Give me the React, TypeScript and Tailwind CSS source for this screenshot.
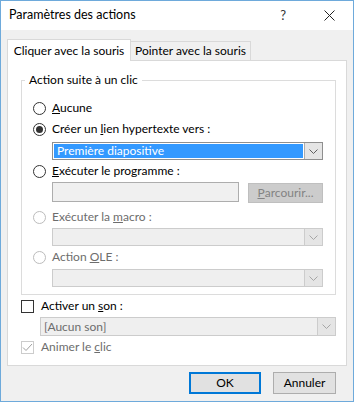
import React from "react";

const font = { fontFamily: 'Lato, "Noto Sans", "Segoe UI", sans-serif' };

function Radio({ checked, disabled }: { checked?: boolean; disabled?: boolean }) {
  return (
    <span
      className={`flex h-[13px] w-[13px] shrink-0 items-center justify-center rounded-full border bg-white ${
        disabled ? "border-[#bcbcbc]" : "border-[#333333]"
      }`}
    >
      {checked && <span className="h-[7px] w-[7px] rounded-full bg-[#333333]" />}
    </span>
  );
}

function Chevron({ color = "#606060" }: { color?: string }) {
  return (
    <svg width="9" height="5" viewBox="0 0 9 5">
      <path d="M0.5 0.5 L4.5 4.5 L8.5 0.5" fill="none" stroke={color} strokeWidth="1" />
    </svg>
  );
}

function Combo({
  value,
  selected,
  disabled,
  className,
}: {
  value?: string;
  selected?: boolean;
  disabled?: boolean;
  className?: string;
}) {
  return (
    <div
      className={`flex h-[18px] border ${
        disabled ? "border-[#cccccc] bg-[#efefef]" : "border-[#8f8f8f] bg-white"
      } ${className ?? ""}`}
    >
      <div
        className={`flex flex-1 items-center pl-[3px] text-[12px] leading-none ${
          selected ? "m-px bg-[#3399ff] text-white" : disabled ? "text-[#6d6d6d]" : "text-black"
        }`}
      >
        {value}
      </div>
      <div
        className={`flex w-[18px] items-center justify-center border-l ${
          disabled ? "border-[#cccccc] bg-[#e5e5e5]" : "border-[#adadad] bg-[#e5e5e5]"
        }`}
      >
        <Chevron color={disabled ? "#a6a6a6" : "#606060"} />
      </div>
    </div>
  );
}

export default function App() {
  return (
    <div
      className="flex h-[402px] w-[354px] flex-col border border-[#6eaadb] bg-[#f0f0f0] text-[12px] text-black"
      style={font}
    >
      {/* Title bar */}
      <div className="flex h-[29px] shrink-0 items-center bg-white pl-[8px]">
        <span className="text-[12.5px]">Paramètres des actions</span>
        <span className="ml-auto mr-[38px] text-[13px] text-[#333]">?</span>
        <svg width="11" height="11" viewBox="0 0 11 11" className="mr-[18px]">
          <path d="M0.5 0.5 L10.5 10.5 M10.5 0.5 L0.5 10.5" stroke="#222" strokeWidth="1" />
        </svg>
      </div>

      {/* Tabs */}
      <div className="flex h-[30px] shrink-0 items-end px-[6px]">
        <div className="relative z-10 -mb-px flex h-[22px] w-[124px] items-center justify-center border border-b-0 border-[#d9d9d9] bg-white">
          Cliquer avec la souris
        </div>
        <div className="flex h-[19px] w-[120px] items-center justify-center border border-b-0 border-l-0 border-[#d9d9d9] bg-[#f0f0f0]">
          Pointer avec la souris
        </div>
      </div>

      {/* Panel */}
      <div className="mx-[6px] flex h-[306px] shrink-0 flex-col border border-[#d9d9d9] bg-white pl-[13px] pr-[10px] pt-[11px]">
        <fieldset className="h-[223px] border border-[#dcdcdc] pl-[11px] pr-[12px]">
          <legend className="-ml-[8px] px-[4px] leading-[16px]">Action suite à un clic</legend>

          <div className="mt-[10px] flex h-[20px] items-center gap-[6px]">
            <Radio />
            <span>
              <u>A</u>ucune
            </span>
          </div>
          <div className="mt-px flex h-[20px] items-center gap-[6px]">
            <Radio checked />
            <span>
              Créer un <u>l</u>ien hypertexte vers :
            </span>
          </div>
          <Combo value="Première diapositive" selected className="ml-[19px] mt-[3px]" />

          <div className="mt-px flex h-[20px] items-center gap-[6px]">
            <Radio />
            <span>
              <u>E</u>xécuter le programme :
            </span>
          </div>
          <div className="ml-[19px] mt-[1px] flex items-start">
            <div className="h-[20px] w-[187px] border border-[#adadad] bg-[#f0f0f0]" />
            <div className="ml-[9px] mt-px flex h-[20px] flex-1 items-center justify-center border border-[#bfbfbf] bg-[#cccccc] text-[#838383]">
              <u>P</u>arcourir...
            </div>
          </div>

          <div className="mt-[4px] flex h-[20px] items-center gap-[6px] text-[#6d6d6d]">
            <Radio disabled />
            <span>
              Exécuter la <u>m</u>acro :
            </span>
          </div>
          <Combo disabled className="ml-[19px] mt-[1px]" />

          <div className="mt-[1px] flex h-[20px] items-center gap-[6px] text-[#6d6d6d]">
            <Radio disabled />
            <span>
              Action <u>O</u>LE :
            </span>
          </div>
          <Combo disabled className="ml-[19px] mt-[2px]" />
        </fieldset>

        <div className="mt-[4px] flex h-[14px] items-center gap-[7px]">
          <span className="h-[13px] w-[13px] border border-[#333333] bg-white" />
          <span>
            Activer un <u>s</u>on :
          </span>
        </div>
        <Combo value="[Aucun son]" disabled className="ml-[19px] mt-[4px] h-[19px]" />

        <div className="mt-[1px] flex h-[20px] items-center gap-[7px] text-[#6d6d6d]">
          <span className="flex h-[13px] w-[13px] items-center justify-center border border-[#cccccc] bg-white">
            <svg width="11" height="9" viewBox="0 0 11 9">
              <path d="M1 4.5 L4 7.5 L10 1" fill="none" stroke="#a0a0a0" strokeWidth="1" />
            </svg>
          </span>
          <span>
            Animer le <u>c</u>lic
          </span>
        </div>
      </div>

      {/* Buttons */}
      <div className="mt-[6px] flex justify-end gap-[12px] pr-[17px]">
        <button className="h-[22px] w-[72px] border-2 border-[#0078d7] bg-[#e1e1e1] text-[12px] leading-none">
          OK
        </button>
        <button className="h-[22px] w-[63px] border border-[#adadad] bg-[#e1e1e1] text-[12px] leading-none">
          Annuler
        </button>
      </div>
    </div>
  );
}
